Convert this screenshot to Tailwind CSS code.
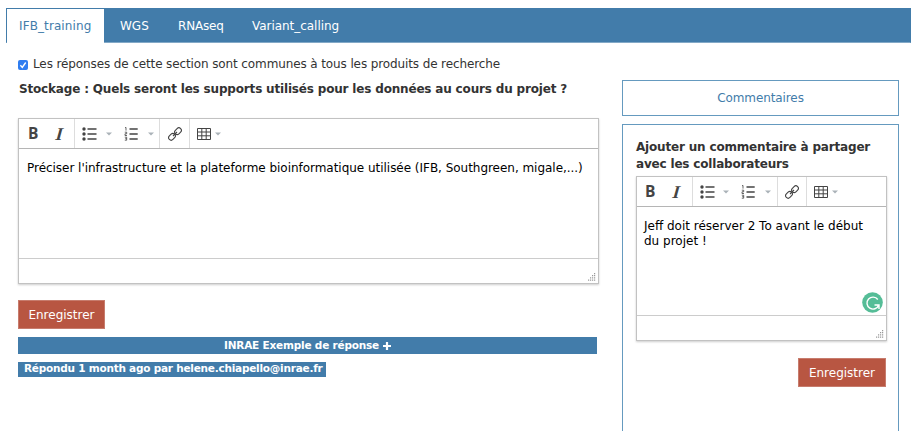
<!DOCTYPE html>
<html lang="fr">
<head>
<meta charset="utf-8">
<title>IFB_training</title>
<script src="https://cdn.jsdelivr.net/npm/@tailwindcss/browser@4"></script>
</head>
<body class="bg-white w-[924px] h-[433px] overflow-hidden font-['DejaVu_Sans','Noto_Sans',sans-serif] text-[12px] text-[#333]">
<svg class="hidden">
  <symbol id="bullets" viewBox="0 0 15 14"><g fill="#444"><circle cx="2" cy="2" r="1.7"/><circle cx="2" cy="7" r="1.7"/><circle cx="2" cy="12" r="1.7"/><path d="M5.5 1.2H14.5V2.8H5.5zM5.5 6.2H14.5V7.8H5.5zM5.5 11.2H14.5V12.8H5.5z"/></g></symbol>
  <symbol id="numbers" viewBox="0 0 15 14"><path fill="#444" d="M5.5 1.2H13.7V2.8H5.5zM5.5 6.2H13.7V7.8H5.5zM5.5 11.2H13.7V12.8H5.5z"/><path fill="none" stroke="#444" stroke-width=".8" d="M1 .8L2 .4V3.6M.8 5.2H2.7V6.8H1V8.5H3M.8 10.2H2.7V13.2H.8M1.2 11.7H2.7"/></symbol>
  <symbol id="link" viewBox="0 0 14 14"><g fill="none" stroke="#444" stroke-width="1.1"><rect x="-3.7" y="-2.5" width="7.4" height="5" rx="2.5" transform="translate(4 9.8) rotate(-45)"/><rect x="-3.7" y="-2.5" width="7.4" height="5" rx="2.5" transform="translate(10 4.2) rotate(-45)"/><path d="M5 9L9 5"/></g></symbol>
  <symbol id="table" viewBox="0 0 14 12"><path fill="none" stroke="#444" d="M.5 .5H13.5V11.5H.5zM.5 4H13.5M.5 7.8H13.5M4.8 .5V11.5M9.2 .5V11.5"/></symbol>
  <symbol id="caret" viewBox="0 0 6 4"><path fill="#aab2b8" d="M0 .4H6L3 3.6z"/></symbol>
  <symbol id="grip" viewBox="0 0 9 9"><path fill="#999" d="M7 0h1.2v1.2H7zM5 2h1.2v1.2H5zM7 2h1.2v1.2H7zM3 4.2h1.2v1.2H3zM5 4.2h1.2v1.2H5zM7 4.2h1.2v1.2H7zM1 6.5h1.2v1.2H1zM3 6.5h1.2v1.2H3zM5 6.5h1.2v1.2H5zM7 6.5h1.2v1.2H7z"/></symbol>
</svg>

<nav class="ml-[6px] mt-[8px] w-[905px] h-[35px] bg-[#427caa] border border-[#427caa] border-b-[#83a9c7] flex text-white leading-[34px]">
  <span class="w-[97px] h-[34px] shrink-0 bg-white text-[#427caa] pl-[12px] tracking-[0.1px]">IFB_training</span>
  <span class="w-[58px] pl-[16px]">WGS</span>
  <span class="w-[74px] pl-[16px] tracking-[-0.2px]">RNAseq</span>
  <span class="pl-[16px] tracking-[-0.04px]">Variant_calling</span>
</nav>

<div class="flex">
  <main class="ml-[18px] w-[581px] shrink-0">
    <div class="flex items-center h-[16px] mt-[13px]">
      <svg class="w-[10px] h-[10px] mr-[5px] mt-[2px]" viewBox="0 0 10 10"><rect width="10" height="10" rx="2" fill="#2f7df0"/><path d="M2.4 5.3L4.3 7.4L7.7 2.5" fill="none" stroke="#fff" stroke-width="1.4"/></svg>
      <span class="whitespace-nowrap tracking-[-0.115px]">Les réponses de cette section sont communes à tous les produits de recherche</span>
    </div>
    <h1 class="ml-px mt-[9px] h-[16px] leading-[16px] font-bold whitespace-nowrap tracking-[-0.175px]">Stockage : Quels seront les supports utilisés pour les données au cours du projet ?</h1>

    <section class="mt-[21px] w-[581px] h-[166px] border border-[#c2c2c2] shadow-[0_1px_2px_rgba(0,0,0,0.2)] flex flex-col">
      <div class="h-[30px] shrink-0 border-b border-[#b5b5b5] flex text-[#444]">
        <div class="w-[56px] border-r border-[#ddd] flex items-center">
          <span class="ml-[9px] w-[12px] font-['Open_Sans'] font-bold text-[15.5px] leading-[28px] pb-px">B</span>
          <span class="ml-[16px] w-[10px] font-['Liberation_Serif'] font-bold italic text-[18px] leading-[28px] origin-center skew-x-[-6deg]">I</span>
        </div>
        <div class="w-[85px] border-r border-[#ddd] flex items-center">
          <svg class="w-[15px] h-[14px] ml-[7px]"><use href="#bullets"/></svg>
          <svg class="w-[6px] h-[4px] ml-[9px]"><use href="#caret"/></svg>
          <svg class="w-[15px] h-[14px] ml-[12px]"><use href="#numbers"/></svg>
          <svg class="w-[6px] h-[4px] ml-[9px]"><use href="#caret"/></svg>
        </div>
        <div class="w-[30px] border-r border-[#ddd] flex items-center justify-center"><svg class="w-[14px] h-[14px]"><use href="#link"/></svg></div>
        <div class="flex items-center"><svg class="w-[14px] h-[12px] ml-[7px]"><use href="#table"/></svg><svg class="w-[6px] h-[4px] ml-[4px]"><use href="#caret"/></svg></div>
      </div>
      <p class="grow pl-[8px] pt-[11px] leading-[16px] text-black whitespace-nowrap tracking-[-0.03px]">Préciser l'infrastructure et la plateforme bioinformatique utilisée (IFB, Southgreen, migale,...)</p>
      <div class="h-[25px] shrink-0 border-t border-[#ccc] flex items-end justify-end"><svg class="w-[9px] h-[9px] mr-[2px] mb-[1px]"><use href="#grip"/></svg></div>
    </section>

    <button class="block mt-[16px] w-[87px] h-[29px] bg-[#b85642] border border-[#c77c6d] text-white">Enregistrer</button>
    <div class="mt-[8px] w-[579px] h-[17px] bg-[#427caa] text-white font-bold text-[10.5px] leading-[16px] pl-[206px] whitespace-nowrap"><span class="tracking-[-0.2px]">INRAE Exemple de réponse</span><svg class="inline ml-[4px] w-[8px] h-[8px] align-[-0.5px]" viewBox="0 0 8 8"><path d="M4 0V8M0 4H8" stroke="#fff" stroke-width="2.2"/></svg></div>
    <div class="mt-[8px] w-[308px] h-[15px] bg-[#427caa] text-white font-bold text-[10.5px] leading-[13px] pl-[6px] whitespace-nowrap tracking-[-0.23px]">Répondu 1 month ago par helene.chiapello@inrae.fr</div>
  </main>

  <aside class="ml-[23px] mt-[37px] w-[277px] shrink-0">
    <div class="h-[36px] border border-[#659abf] text-[#427caa] text-center leading-[34px] tracking-[-0.1px]">Commentaires</div>
    <div class="mt-[8px] h-[307px] border border-b-0 border-[#659abf] pl-[13px] pt-[14px]">
      <h2 class="font-bold leading-[17px] whitespace-nowrap tracking-[-0.18px]">Ajouter un commentaire à partager<br>avec les collaborateurs</h2>
      <section class="relative mt-[3px] w-[251px] h-[165px] border border-[#c2c2c2] shadow-[0_1px_2px_rgba(0,0,0,0.2)] flex flex-col">
        <div class="h-[30px] shrink-0 border-b border-[#b5b5b5] flex text-[#444]">
          <div class="w-[56px] border-r border-[#ddd] flex items-center">
            <span class="ml-[8px] w-[12px] font-['Open_Sans'] font-bold text-[15.5px] leading-[28px] pb-px">B</span>
            <span class="ml-[16px] w-[10px] font-['Liberation_Serif'] font-bold italic text-[18px] leading-[28px] origin-center skew-x-[-6deg]">I</span>
          </div>
          <div class="w-[85px] border-r border-[#ddd] flex items-center">
            <svg class="w-[15px] h-[14px] ml-[7px]"><use href="#bullets"/></svg>
            <svg class="w-[6px] h-[4px] ml-[8px]"><use href="#caret"/></svg>
            <svg class="w-[15px] h-[14px] ml-[12px]"><use href="#numbers"/></svg>
            <svg class="w-[6px] h-[4px] ml-[9px]"><use href="#caret"/></svg>
          </div>
          <div class="w-[29px] border-r border-[#ddd] flex items-center justify-center"><svg class="w-[14px] h-[14px]"><use href="#link"/></svg></div>
          <div class="flex items-center"><svg class="w-[14px] h-[12px] ml-[7px]"><use href="#table"/></svg><svg class="w-[6px] h-[4px] ml-[4px]"><use href="#caret"/></svg></div>
        </div>
        <p class="grow pl-[7px] pt-[12px] leading-[15px] text-black whitespace-nowrap">Jeff doit réserver 2 To avant le début<br>du projet !</p>
        <svg class="absolute right-[3px] bottom-[27px] w-[21px] h-[21px]" viewBox="0 0 21 21"><circle cx="10.5" cy="10.5" r="10.3" fill="#55bd97"/><path d="M15.8 7.5A6 6 0 1 0 16.6 13.2M12.5 13H17V17" fill="none" stroke="#fff" stroke-width="1.4"/></svg>
        <div class="h-[25px] shrink-0 border-t border-[#ccc] flex items-end justify-end"><svg class="w-[9px] h-[9px] mr-[2px] mb-[1px]"><use href="#grip"/></svg></div>
      </section>
      <button class="block ml-[162px] mt-[17px] w-[88px] h-[29px] bg-[#b85642] border border-[#c77c6d] text-white">Enregistrer</button>
    </div>
  </aside>
</div>
</body>
</html>
